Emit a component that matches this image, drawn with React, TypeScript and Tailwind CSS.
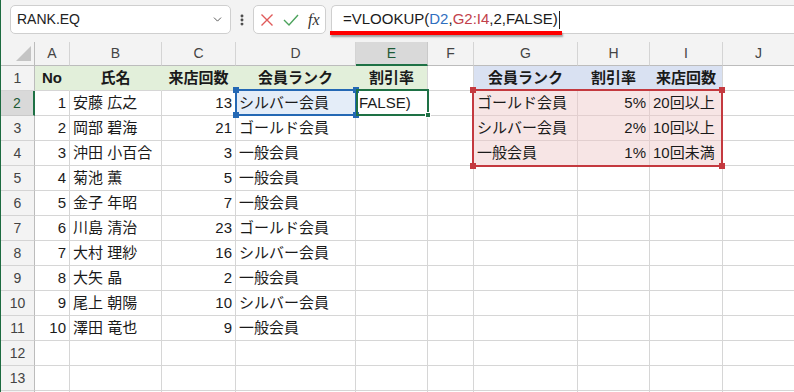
import { ChevronDown, EllipsisVertical } from 'lucide-react'

const colLetters = ['A', 'B', 'C', 'D', 'E', 'F', 'G', 'H', 'I', 'J']

const rows: string[][] = [
  ['No', '氏名', '来店回数', '会員ランク', '割引率', '', '会員ランク', '割引率', '来店回数', ''],
  ['1', '安藤 広之', '13', 'シルバー会員', 'FALSE)', '', 'ゴールド会員', '5%', '20回以上', ''],
  ['2', '岡部 碧海', '21', 'ゴールド会員', '', '', 'シルバー会員', '2%', '10回以上', ''],
  ['3', '沖田 小百合', '3', '一般会員', '', '', '一般会員', '1%', '10回未満', ''],
  ['4', '菊池 薫', '5', '一般会員'],
  ['5', '金子 年昭', '7', '一般会員'],
  ['6', '川島 清治', '23', 'ゴールド会員'],
  ['7', '大村 理紗', '16', 'シルバー会員'],
  ['8', '大矢 晶', '2', '一般会員'],
  ['9', '尾上 朝陽', '10', 'シルバー会員'],
  ['10', '澤田 竜也', '9', '一般会員'],
  [],
  [],
  [],
]

function cellClass(r: number, c: number) {
  // r: 0-based data row (0 = row 1), c: 0-based column (0 = A)
  if (r === 0 && c <= 4) return `bg-[#e2efda] border-b-[#d6d6d6] ${c === 4 ? 'border-r-[#d6d6d6]' : 'border-r-[#e2efda]'}`
  if (r === 0 && c >= 6 && c <= 8) return `bg-[#d9e1f2] border-b-[#d9e1f2] ${c === 8 ? 'border-r-[#d6d6d6]' : 'border-r-[#d9e1f2]'}`
  if (r >= 1 && r <= 3 && c >= 6 && c <= 8) return 'bg-[#f7e5e5] border-[#e2cfcf]'
  if (r === 1 && c === 3) return 'bg-[#e4edf8] border-[#d6d6d6]'
  return 'bg-white border-[#d6d6d6]'
}

function alignClass(r: number, c: number) {
  if (r === 0) return 'justify-center font-bold'
  if (c === 0 || c === 2 || c === 7) return 'justify-end pr-[3px]'
  return 'justify-start pl-[3px]'
}

export default function App() {
  return (
    <div className="w-[794px] h-[392px] overflow-hidden bg-white border-l border-[#1d6b40] font-['Liberation_Sans','Noto_Sans_CJK_JP',sans-serif] text-[#1a1a1a]">
      {/* Formula bar */}
      <div className="relative h-[42px] bg-[#f3f3f3] flex items-start pt-[5px]">
        <div className="ml-[9px] w-[221px] h-[29px] bg-white border border-[#cfcfcf] rounded-[5px] flex items-center justify-between pl-[6px] pr-[6px]">
          <span className="text-[14px] text-[#222]">RANK.EQ</span>
          <ChevronDown className="w-[13px] h-[13px] text-[#444]" strokeWidth={1.6} />
        </div>
        <div className="w-[22px] h-[29px] flex items-center justify-center">
          <EllipsisVertical className="w-[14px] h-[14px] text-[#444]" strokeWidth={3} />
        </div>
        <div className="w-[73px] h-[29px] bg-white border border-[#cfcfcf] rounded-[5px] flex items-center gap-[9px] pl-[6px]">
          <svg width="14" height="14" viewBox="0 0 14 14">
            <path d="M1.5 1.5 L12.5 12.5 M12.5 1.5 L1.5 12.5" stroke="#e05a5a" strokeWidth="1.4" fill="none" />
          </svg>
          <svg width="16" height="14" viewBox="0 0 16 14">
            <path d="M1 7 L6 12 L15 2" stroke="#4ca35c" strokeWidth="1.4" fill="none" />
          </svg>
          <span className="font-['Liberation_Serif',serif] italic text-[16px] text-[#333] leading-none">fx</span>
        </div>
        <div className="ml-[5px] flex-1 h-[29px] bg-white border border-r-0 border-[#cfcfcf] rounded-l-[5px] flex items-center pl-[11px] text-[15px]">
          <span>=VLOOKUP(</span>
          <span className="text-[#2f6fbf]">D2</span>
          <span>,</span>
          <span className="text-[#c2404a]">G2:I4</span>
          <span>,2,FALSE)</span>
          <span className="ml-[1px] w-px h-[18px] bg-[#222]" />
        </div>
        {/* annotation underline */}
        <div className="absolute left-[329px] top-[31px] w-[232px] h-[4px] bg-[#ff0000] shadow-[1px_2px_2px_rgba(0,0,0,0.35)]" />
      </div>

      {/* Sheet */}
      <div className="relative grid grid-cols-[34px_35px_92px_74px_120px_72px_46px_104px_72px_73px_72px] grid-rows-[24px_repeat(14,25px)] text-[15px]">
        {/* corner */}
        <div className="relative bg-[#f3f3f3] border-r border-b border-[#bcbcbc]">
          <svg className="absolute right-[3px] bottom-[4px]" width="15" height="15" viewBox="0 0 15 15">
            <path d="M15 0 L15 15 L0 15 Z" fill="#c4c4c4" />
          </svg>
        </div>
        {colLetters.map((l) => (
          <div
            key={l}
            className={`flex items-center justify-center text-[14px] border-r ${
              l === 'E'
                ? 'bg-[#d9d9d9] border-r-[#c9c9c9] border-b-2 border-b-[#1e7145] text-[#1e5a36]'
                : 'bg-[#f3f3f3] border-r-[#d4d4d4] border-b border-b-[#bcbcbc] text-[#444]'
            }`}
          >
            {l}
          </div>
        ))}

        {rows.map((row, r) => (
          <div key={r} className="contents">
            <div
              className={`flex items-center justify-center text-[14px] border-b ${
                r === 1
                  ? 'bg-[#d9d9d9] border-r-2 border-r-[#1e7145] border-b-[#c9c9c9] text-[#1e5a36]'
                  : 'bg-[#f3f3f3] border-r border-r-[#bcbcbc] border-b-[#d4d4d4] text-[#444]'
              }`}
            >
              {r < 13 ? r + 1 : ''}
            </div>
            {colLetters.map((_, c) => (
              <div
                key={c}
                className={`flex items-center whitespace-nowrap overflow-hidden border-r border-b ${cellClass(r, c)} ${alignClass(r, c)}`}
              >
                {row[c] ?? ''}
              </div>
            ))}
          </div>
        ))}

        {/* referenced range G2:I4 */}
        <div className="absolute left-[471px] top-[47px] w-[251px] h-[78px] border-2 border-[#c4393f] pointer-events-none">
          <span className="absolute -left-[4px] -top-[4px] w-[6px] h-[6px] bg-[#c4393f]" />
          <span className="absolute -right-[4px] -top-[4px] w-[6px] h-[6px] bg-[#c4393f]" />
          <span className="absolute -left-[4px] -bottom-[4px] w-[6px] h-[6px] bg-[#c4393f]" />
          <span className="absolute -right-[4px] -bottom-[4px] w-[6px] h-[6px] bg-[#c4393f]" />
        </div>

        {/* referenced cell D2 */}
        <div className="absolute left-[234px] top-[47px] w-[122px] h-[27px] border-2 border-[#2468b4] pointer-events-none">
          <span className="absolute -left-[4px] -top-[4px] w-[6px] h-[6px] bg-[#2468b4]" />
          <span className="absolute -right-[4px] -top-[4px] w-[6px] h-[6px] bg-[#2468b4]" />
          <span className="absolute -left-[4px] -bottom-[4px] w-[6px] h-[6px] bg-[#2468b4]" />
          <span className="absolute -right-[4px] -bottom-[4px] w-[6px] h-[6px] bg-[#2468b4]" />
        </div>

        {/* active cell E2 */}
        <div className="absolute left-[355px] top-[47px] w-[73px] h-[27px] border-2 border-[#1e7145] pointer-events-none">
          <span className="absolute -right-[4px] -bottom-[4px] w-[6px] h-[6px] bg-[#1e7145] border border-white" />
        </div>
      </div>
    </div>
  )
}
